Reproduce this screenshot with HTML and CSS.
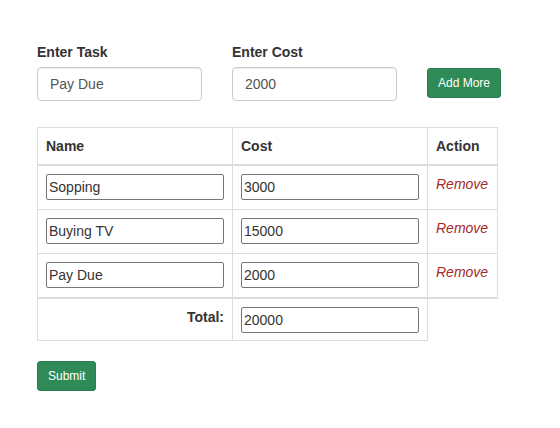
FILE: index.html
```html
<!DOCTYPE html>
<html>
<head>
<meta charset="utf-8">
<link rel="stylesheet" href="styles.css">
</head>
<body>
<div class="page">
  <form class="entry">
    <label class="lbl">Enter Task</label>
    <label class="lbl">Enter Cost</label>
    <span></span>
    <input class="form-control" type="text" value="Pay Due">
    <input class="form-control" type="text" value="2000">
    <button type="button" class="btn btn-add">Add More</button>
  </form>

  <table class="grid">
    <thead>
      <tr>
        <th class="c1">Name</th>
        <th class="c2">Cost</th>
        <th class="c3">Action</th>
      </tr>
    </thead>
    <tbody>
      <tr>
        <td><input class="cell-input" type="text" value="Sopping"></td>
        <td><input class="cell-input" type="text" value="3000"></td>
        <td><a class="remove">Remove</a></td>
      </tr>
      <tr>
        <td><input class="cell-input" type="text" value="Buying TV"></td>
        <td><input class="cell-input" type="text" value="15000"></td>
        <td><a class="remove">Remove</a></td>
      </tr>
      <tr>
        <td><input class="cell-input" type="text" value="Pay Due"></td>
        <td><input class="cell-input" type="text" value="2000"></td>
        <td><a class="remove">Remove</a></td>
      </tr>
    </tbody>
    <tbody class="totals">
      <tr>
        <td class="total-label">Total:</td>
        <td><input class="cell-input" type="text" value="20000"></td>
      </tr>
    </tbody>
  </table>

  <button type="button" class="btn">Submit</button>
</div>
</body>
</html>
```
FILE: styles.css
```css
* { box-sizing: border-box; }
html, body { margin: 0; padding: 0; background: #fff; }
body {
  font-family: "Liberation Sans", Arial, Helvetica, sans-serif;
  font-size: 14px;
  line-height: 20px;
  color: #333;
}
.page { padding: 42px 0 0 37px; }

.entry {
  display: grid;
  grid-template-columns: 195px 195px auto;
  grid-template-rows: auto auto;
  align-items: start;
  margin: 0;
}
.lbl {
  font-weight: bold;
  margin-bottom: 5px;
}
.form-control {
  width: 165px;
  height: 34px;
  padding: 6px 12px;
  font-family: inherit;
  font-size: 14px;
  line-height: 20px;
  color: #555;
  border: 1px solid #ccc;
  border-radius: 4px;
  box-shadow: inset 0 1px 1px rgba(0,0,0,.075);
  background: #fff;
  outline: none;
}
.btn {
  justify-self: start;
  height: 30px;
  padding: 5px 10px;
  font-family: inherit;
  font-size: 12px;
  line-height: 18px;
  color: #fff;
  background: #2e8b57;
  border: 1px solid #2a7f50;
  border-radius: 3px;
  cursor: pointer;
}
.btn-add { margin-top: 1px; }

.grid {
  margin-top: 26px;
  margin-bottom: 20px;
  border-collapse: collapse;
  border-spacing: 0;
}
.grid th, .grid td {
  border: 1px solid #ddd;
  padding: 8px 8px 9px;
  vertical-align: top;
  text-align: left;
}
.grid th {
  padding: 8px;
  font-weight: bold;
  border-bottom: 2px solid #ddd;
}
.c1, .c2 { width: 195px; }
.c3 { width: 70px; }
.totals { border-top: 2px solid #ddd; }
.totals td { padding-bottom: 7px; }
.grid td.total-label {
  text-align: right;
  font-weight: bold;
  padding-top: 8px;
}
.cell-input {
  display: block;
  width: 100%;
  height: 26px;
  padding: 1px 2px;
  font-family: inherit;
  font-size: 14px;
  color: #333;
  border: 1px solid #767676;
  border-radius: 2px;
  background: #fff;
}
.remove {
  font-style: italic;
  color: #a52a2a;
  cursor: pointer;
}
```
